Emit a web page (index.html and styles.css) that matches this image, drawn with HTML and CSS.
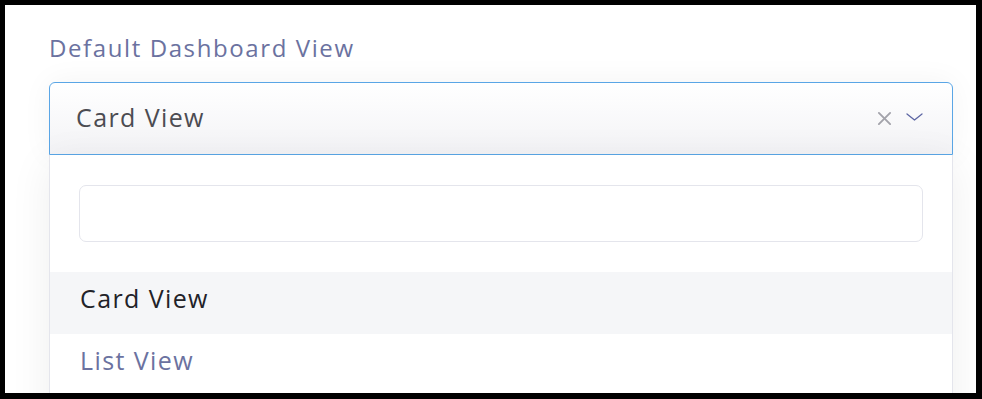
FILE: index.html
```html
<!DOCTYPE html>
<html>
<head>
  <meta charset="UTF-8">
  <title>Default Dashboard View</title>
  <link rel="stylesheet" href="styles.css">
</head>
<body>
  <div class="frame">
    <div class="field">
      <label class="field-label" for="viewSearch">Default Dashboard View</label>

      <div class="select is-open">
        <div class="select-control">
          <span class="select-value">Card View</span>
          <span class="select-clear">
            <svg viewBox="0 0 16 16" fill="none" stroke="currentColor" stroke-width="2" stroke-linecap="round">
              <line x1="2" y1="2" x2="14" y2="14"/>
              <line x1="14" y1="2" x2="2" y2="14"/>
            </svg>
          </span>
          <span class="select-arrow">
            <svg viewBox="0 0 17 8" fill="none" stroke="currentColor" stroke-width="1.3" stroke-linecap="round" stroke-linejoin="round">
              <polyline points="1 1 8.5 7 16 1"/>
            </svg>
          </span>
        </div>

        <div class="select-menu">
          <div class="select-search">
            <input type="text" id="viewSearch">
          </div>
          <ul class="select-options">
            <li class="option is-active">Card View</li>
            <li class="option">List View</li>
          </ul>
        </div>
      </div>
    </div>
  </div>
</body>
</html>
```

FILE: styles.css
```css
:root {
  --label: #6b72a0;
  --text: #4c4c52;
  --text-dark: #222228;
  --focus: #5aa6e6;
  --line: #e4e5ec;
  --hover-bg: #f5f6f8;
  --muted: #a3a3ab;
  --arrow: #5d66a3;
}

html, body {
  margin: 0;
  height: 100%;
  overflow: hidden;
}

body {
  font-family: "Open Sans", "Noto Sans", sans-serif;
  background: #fff;
  color: var(--text);
}

.frame {
  box-sizing: border-box;
  width: 982px;
  height: 399px;
  border-style: solid;
  border-color: #000;
  border-width: 5px 6px 6px 5px;
  background: #fff;
  padding: 28px 23px 0 44px;
  overflow: hidden;
}

.field-label {
  display: block;
  font-size: 24px;
  line-height: 30px;
  letter-spacing: 1.6px;
  color: var(--label);
  margin-bottom: 19px;
}

.select {
  position: relative;
}

.select-control {
  box-sizing: border-box;
  height: 73px;
  display: flex;
  align-items: center;
  padding: 0 29px 0 26px;
  border: 1px solid var(--focus);
  border-radius: 6px 6px 0 0;
  background: linear-gradient(#ffffff, #f3f3f6);
  box-shadow: 0 0 30px rgba(0, 0, 0, 0.05);
}

.select-value {
  flex: 1;
  font-size: 25px;
  letter-spacing: 1.4px;
  color: var(--text);
  padding-bottom: 3px;
}

.select-clear {
  display: flex;
  width: 15px;
  height: 15px;
  color: var(--muted);
  margin-right: 14px;
}

.select-arrow {
  display: flex;
  width: 17px;
  height: 8px;
  color: var(--arrow);
  margin-top: -4px;
}

.select-clear svg,
.select-arrow svg {
  width: 100%;
  height: 100%;
}

.select-menu {
  background: #fff;
  border-left: 1px solid var(--line);
  border-right: 1px solid var(--line);
  box-shadow: 0 8px 40px rgba(0, 0, 0, 0.07);
  padding-top: 30px;
  height: 300px;
}

.select-search {
  padding: 0 29px 30px;
}

.select-search input {
  box-sizing: border-box;
  display: block;
  width: 100%;
  height: 57px;
  border: 1px solid var(--line);
  border-radius: 7px;
  background: #fff;
  outline: none;
}

.select-options {
  list-style: none;
  margin: 0;
  padding: 0;
}

.option {
  box-sizing: border-box;
  height: 62px;
  display: flex;
  align-items: center;
  padding: 0 30px 11px;
  font-size: 25px;
  letter-spacing: 1.4px;
  color: var(--label);
}

.option.is-active {
  background: var(--hover-bg);
  color: var(--text-dark);
}
```
